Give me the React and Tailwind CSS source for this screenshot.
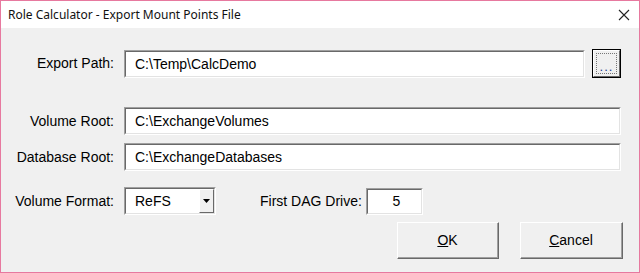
import React from 'react';

const font = { fontFamily: '"Liberation Sans", Arial, sans-serif' };

function Sunken({ className = '', children }) {
    return (
        <div className={`border-t border-l border-[#a0a0a0] border-b border-r border-b-white border-r-white ${className}`}>
            <div className="w-full h-full border-t border-l border-[#696969] border-b border-r border-b-[#e3e3e3] border-r-[#e3e3e3] bg-white flex items-center">
                {children}
            </div>
        </div>
    );
}

function Field({ value, className = '' }) {
    return (
        <Sunken className={className}>
            <span className="pl-[9px] text-[14px] text-black leading-none">{value}</span>
        </Sunken>
    );
}

function Label({ children }) {
    return <div className="w-[114px] pr-[1px] text-right text-[14px] text-black shrink-0">{children}</div>;
}

function PushButton({ children, className = '' }) {
    return (
        <button className={`border-t border-l border-white border-b border-r border-b-[#696969] border-r-[#696969] bg-[#f0f0f0] ${className}`}>
            <div className="w-full h-full border-b border-r border-b-[#a0a0a0] border-r-[#a0a0a0] flex items-center justify-center text-[14px] text-black">
                {children}
            </div>
        </button>
    );
}

export default function App() {
    return (
        <div className="w-[640px] h-[273px] border border-[#e7799f] bg-[#f0f0f0] flex flex-col" style={font}>
            <div className="h-[27px] bg-white flex items-center justify-between pl-[7px] pr-[8px] shrink-0">
                <span className="text-[12px] text-[#111]" style={{ fontFamily: '"Noto Sans", "Open Sans", sans-serif' }}>
                    Role Calculator - Export Mount Points File
                </span>
                <svg width="12" height="12" viewBox="0 0 12 12" className="mr-[1px]">
                    <path d="M1 1 L11 11 M11 1 L1 11" stroke="#222" strokeWidth="1.1" />
                </svg>
            </div>

            <div className="flex flex-col pt-[21px]">
                <div className="flex items-center h-[29px]">
                    <Label>Export Path:</Label>
                    <Field value="C:\Temp\CalcDemo" className="ml-[9px] w-[461px] h-[28px]" />
                    <button className="ml-[7px] w-[29px] h-[29px] border border-black bg-[#f0f0f0]">
                        <div className="w-full h-full border-t border-l border-white border-b border-r border-b-[#696969] border-r-[#696969] p-[2px]">
                            <div className="w-full h-full border border-dotted border-[#777] flex items-end justify-center">
                                <span className="text-[13px] leading-[12px] text-[#1a3a8a] tracking-[1px]">...</span>
                            </div>
                        </div>
                    </button>
                </div>

                <div className="flex items-center h-[28px] mt-[29px]">
                    <Label>Volume Root:</Label>
                    <Field value="C:\ExchangeVolumes" className="ml-[9px] w-[497px] h-[28px]" />
                </div>

                <div className="flex items-center h-[28px] mt-[8px]">
                    <Label>Database Root:</Label>
                    <Field value="C:\ExchangeDatabases" className="ml-[9px] w-[497px] h-[28px]" />
                </div>

                <div className="flex items-center h-[28px] mt-[16px]">
                    <Label>Volume Format:</Label>
                    <Sunken className="ml-[9px] w-[92px] h-[28px]">
                        <span className="pl-[9px] text-[14px] text-black leading-none flex-1">ReFS</span>
                        <div className="w-[15px] h-full bg-[#f0f0f0] border-t border-l border-white border-b border-r border-b-[#696969] border-r-[#696969] flex items-center justify-center">
                            <svg width="7" height="4" viewBox="0 0 7 4">
                                <path d="M0 0 H7 L3.5 4 Z" fill="#000" />
                            </svg>
                        </div>
                    </Sunken>
                    <span className="ml-[44px] text-[14px] text-black">First DAG Drive:</span>
                    <Sunken className="ml-[4px] w-[57px] h-[27px]">
                        <span className="w-full text-center text-[14px] text-black leading-none pl-[4px]">5</span>
                    </Sunken>
                </div>

                <div className="flex items-center mt-[7px] pl-[396px]">
                    <PushButton className="w-[102px] h-[37px]">
                        <span><u>O</u>K</span>
                    </PushButton>
                    <PushButton className="ml-[21px] w-[103px] h-[37px]">
                        <span><u>C</u>ancel</span>
                    </PushButton>
                </div>
            </div>
        </div>
    );
}
